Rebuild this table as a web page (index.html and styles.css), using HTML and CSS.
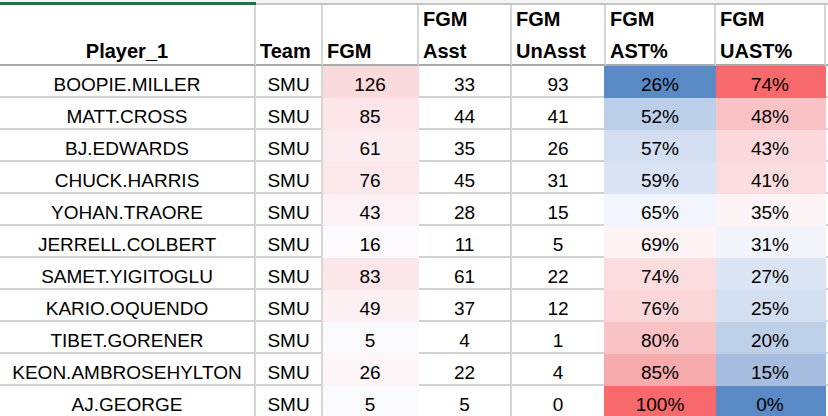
FILE: index.html
```html
<!DOCTYPE html>
<html>
<head>
<meta charset="utf-8">
<link rel="stylesheet" href="styles.css">
</head>
<body>
<div class="strip"><div class="sel"></div><div class="rest"></div></div>
<table class="sheet">
  <colgroup>
    <col class="w-player"><col class="w-team"><col class="w-fgm"><col class="w-asst"><col class="w-unasst"><col class="w-pct"><col class="w-pct"><col class="w-extra">
  </colgroup>
  <thead>
    <tr class="head">
      <th class="center">Player_1</th>
      <th>Team</th>
      <th>FGM</th>
      <th><span class="l1">FGM</span><span class="l2">Asst</span></th>
      <th><span class="l1">FGM</span><span class="l2">UnAsst</span></th>
      <th><span class="l1">FGM</span><span class="l2">AST%</span></th>
      <th><span class="l1">FGM</span><span class="l2">UAST%</span></th>
      <th></th>
    </tr>
  </thead>
  <tbody>
    <tr><td>BOOPIE.MILLER</td><td>SMU</td><td class="c" style="--bg:#FBDADC">126</td><td>33</td><td>93</td><td class="c l" style="--bg:#5A8AC6">26%</td><td class="c" style="--bg:#F8696B">74%</td><td></td></tr>
    <tr><td>MATT.CROSS</td><td>SMU</td><td class="c" style="--bg:#FBE5E8">85</td><td>44</td><td>41</td><td class="c l" style="--bg:#BCCFE8">52%</td><td class="c" style="--bg:#F9C3C5">48%</td><td></td></tr>
    <tr><td>BJ.EDWARDS</td><td>SMU</td><td class="c" style="--bg:#FCECEF">61</td><td>35</td><td>26</td><td class="c l" style="--bg:#D3DFF1">57%</td><td class="c" style="--bg:#FBD8DB">43%</td><td></td></tr>
    <tr><td>CHUCK.HARRIS</td><td>SMU</td><td class="c" style="--bg:#FBE8EB">76</td><td>45</td><td>31</td><td class="c l" style="--bg:#DAE3F3">59%</td><td class="c" style="--bg:#FBDDE0">41%</td><td></td></tr>
    <tr><td>YOHAN.TRAORE</td><td>SMU</td><td class="c" style="--bg:#FCF1F4">43</td><td>28</td><td>15</td><td class="c l" style="--bg:#F2F5FD">65%</td><td class="c" style="--bg:#FCF3F5">35%</td><td></td></tr>
    <tr><td>JERRELL.COLBERT</td><td>SMU</td><td class="c" style="--bg:#FCF9FC">16</td><td>11</td><td>5</td><td class="c l" style="--bg:#FDF2F4">69%</td><td class="c" style="--bg:#F3F4FB">31%</td><td></td></tr>
    <tr><td>SAMET.YIGITOGLU</td><td>SMU</td><td class="c" style="--bg:#FBE6E9">83</td><td>61</td><td>22</td><td class="c l" style="--bg:#FBDDE0">74%</td><td class="c" style="--bg:#DBE4F2">27%</td><td></td></tr>
    <tr><td>KARIO.OQUENDO</td><td>SMU</td><td class="c" style="--bg:#FCF0F2">49</td><td>37</td><td>12</td><td class="c l" style="--bg:#FAD6D9">76%</td><td class="c" style="--bg:#D3DEF0">25%</td><td></td></tr>
    <tr><td>TIBET.GORENER</td><td>SMU</td><td class="c" style="--bg:#FAFAFD">5</td><td>4</td><td>1</td><td class="c l" style="--bg:#F9C3C5">80%</td><td class="c" style="--bg:#BECFE8">20%</td><td></td></tr>
    <tr><td>KEON.AMBROSEHYLTON</td><td>SMU</td><td class="c" style="--bg:#FCF6F9">26</td><td>22</td><td>4</td><td class="c l" style="--bg:#F8ABAD">85%</td><td class="c" style="--bg:#A6BDE0">15%</td><td></td></tr>
    <tr><td>AJ.GEORGE</td><td>SMU</td><td class="c" style="--bg:#FAFAFD">5</td><td>5</td><td>0</td><td class="c l" style="--bg:#F8696B">100%</td><td class="c" style="--bg:#5A8AC6">0%</td><td></td></tr>
  </tbody>
</table>
</body>
</html>
```

FILE: styles.css
```css
html, body {
  margin: 0;
  padding: 0;
  background: #ffffff;
  overflow: hidden;
}

body {
  font-family: "Liberation Sans", Arial, sans-serif;
  color: #000;
}

.strip {
  display: flex;
  height: 5px;
  width: 860px;
  background: #f4f4f4;
}

.strip .sel {
  width: 256px;
  margin-top: 2px;
  background: #1e7145;
}

.strip .rest {
  flex: 1;
  margin-top: 3px;
  background: #c4c4c4;
}

.sheet {
  border-collapse: separate;
  border-spacing: 0;
  table-layout: fixed;
  width: 846px;
}

.w-player { width: 256px; }
.w-team { width: 67px; }
.w-fgm { width: 96px; }
.w-asst { width: 93px; }
.w-unasst { width: 94px; }
.w-pct { width: 110px; }
.w-extra { width: 20px; }

.sheet th,
.sheet td {
  padding: 0;
  border-right: 2px solid #d6d6d6;
  border-bottom: 2px solid #d2d2d2;
  vertical-align: bottom;
  white-space: nowrap;
  overflow: hidden;
}

.head {
  height: 61px;
}

.sheet th {
  font-size: 20px;
  font-weight: bold;
  line-height: 25px;
  text-align: left;
  padding-left: 4px;
  border-bottom-color: #a9a9a9;
}

.sheet th.center {
  text-align: center;
  padding-left: 0;
}

.sheet th .l1,
.sheet th .l2 {
  display: block;
}

.sheet th .l1 {
  margin-bottom: 7px;
}

.sheet tbody tr {
  height: 32px;
}

.sheet td {
  font-size: 19px;
  line-height: normal;
  text-align: center;
}

.sheet td.c {
  background: var(--bg);
  border-right-color: var(--bg);
  border-bottom-color: var(--bg);
}

.sheet td.l {
  box-shadow: -2px 0 0 var(--bg);
}
```
